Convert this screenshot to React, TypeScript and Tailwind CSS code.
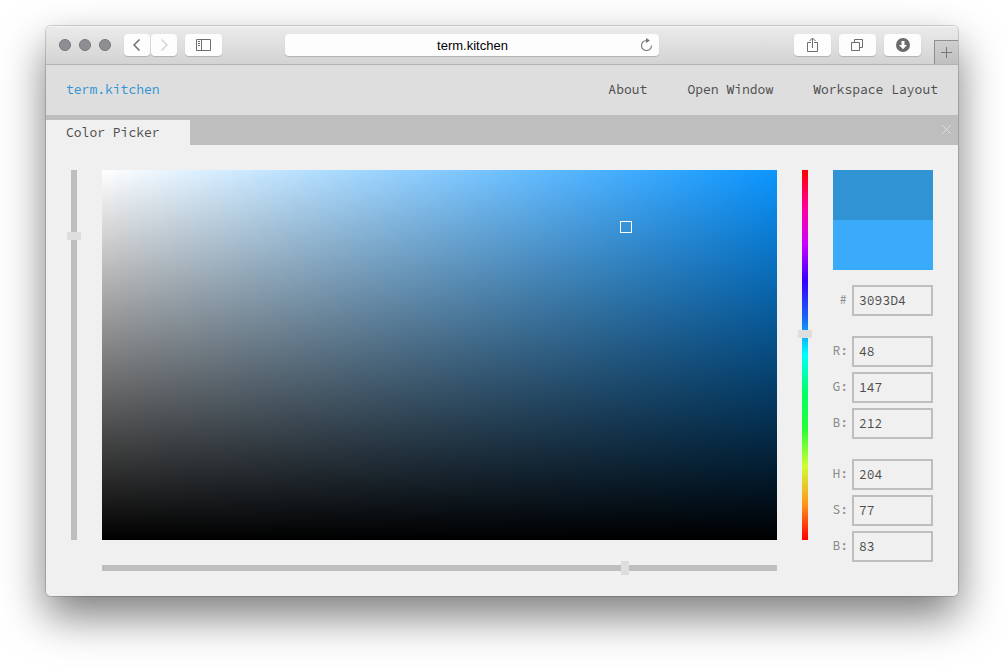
import React from "react";

const hueStops =
  "bg-[linear-gradient(to_bottom,#ff0000_0%,#ff0099_10%,#cd00ff_20%,#3200ff_30%,#1a66f5_40%,#00fffd_50%,#00ff66_60%,#26ff33_70%,#cdff33_80%,#ff991a_90%,#ff0000_100%)]";

const button =
  "flex h-[22px] items-center justify-center rounded-[4px] bg-[#fdfdfd] text-[#6e6e6e] shadow-[0_1px_1px_rgba(0,0,0,0.18)]";

function Field({ label, value, gap }: { label: string; value: string; gap?: boolean }) {
  return (
    <label className={gap ? "mt-[20px] flex h-[31px] items-center" : "mt-[5px] flex h-[31px] items-center"}>
      <span className="-mt-[2px] mr-1 flex w-[15px] justify-end text-[#8a8a8a]">
        {label}
        {label === "#" && <span className="w-px" />}
      </span>
      <input
        className="h-[31px] w-[81px] border-2 border-[#bebebe] bg-transparent px-[5px] text-[#4d4d4d] outline-none"
        defaultValue={value}
      />
    </label>
  );
}

function Toolbar() {
  return (
    <div className="flex h-[39px] items-start border-b border-[#b2b2b2] bg-linear-to-b from-[#ebebeb] to-[#d3d3d3] shadow-[inset_0_1px_0_#f5f5f5]">
      <div className="mt-[13px] ml-[13px] flex gap-2">
        <i className="size-3 rounded-full border border-[#77777c] bg-[#8e8e93]" />
        <i className="size-3 rounded-full border border-[#77777c] bg-[#8e8e93]" />
        <i className="size-3 rounded-full border border-[#77777c] bg-[#8e8e93]" />
      </div>
      <div className="mt-2 ml-[13px] flex gap-px">
        <span className={`${button} w-[26px]`}>
          <svg width="8" height="12" viewBox="0 0 8 12" fill="none" stroke="#6e6e6e" strokeWidth="1.5"><path d="M6.500 .5 1 6l5.500 5.500" /></svg>
        </span>
        <span className={`${button} w-[26px]`}>
          <svg width="8" height="12" viewBox="0 0 8 12" fill="none" stroke="#d5d5d5" strokeWidth="1.5"><path d="M1.500 .5 7 6l-5.500 5.500" /></svg>
        </span>
      </div>
      <span className={`${button} mt-2 ml-2 w-[37px]`}>
        <svg width="15" height="12" viewBox="0 0 15 12" fill="none" stroke="currentColor"><path d="M.5.5h14v11H.5zM5.500.5v11M2 2.500h2M2 4.500h2M2 6.500h2" /></svg>
      </span>
      <div className="mt-2 ml-[63px] flex h-[22px] w-[374px] items-center rounded-[4px] bg-[#fdfdfd] pr-[6px] font-['Liberation_Sans',sans-serif] text-[13px] text-black shadow-[0_1px_1px_rgba(0,0,0,0.18)]">
        <span className="flex-1 pt-[2px] pl-[20px] text-center">term.kitchen</span>
        <svg width="13" height="14" viewBox="0 0 13 14" fill="none" stroke="#777"><path d="M6.500 2.500a5 5 0 1 0 5 5" strokeWidth="1.100" /><path d="M6 0v5L10 2.500z" fill="#777" stroke="none" /></svg>
      </div>
      <div className="mt-2 ml-[135px] flex gap-2">
        <span className={`${button} w-[37px]`}>
          <svg width="11" height="16" viewBox="0 0 11 16" fill="none" stroke="currentColor"><path d="M4 5.500H.5v9h10v-9H7M5.500 11V1M2.500 4l3-3 3 3" /></svg>
        </span>
        <span className={`${button} w-[37px]`}>
          <svg width="13" height="12" viewBox="0 0 13 12" fill="none" stroke="currentColor"><path d="M.5 3.500h8v8h-8zM3.500 3.500v-3h8v8h-3" /></svg>
        </span>
        <span className={`${button} w-[37px]`}>
          <svg width="14" height="14" viewBox="0 0 14 14"><circle cx="7" cy="7" r="7" fill="#6b6b6b" /><path d="M5.500 3h3v4h2.500L7 11.300 3 7h2.500z" fill="#fff" /></svg>
        </span>
      </div>
      <div className="mt-[14px] ml-[13px] flex h-6 w-6 items-center justify-center border-t border-l border-[#8f8f8f] bg-linear-to-b from-[#cecece] to-[#bfbfbf]">
        <svg width="11" height="11" viewBox="0 0 11 11" stroke="#777"><path d="M5.500 0v11M0 5.500h11" /></svg>
      </div>
    </div>
  );
}

export default function App() {
  return (
    <div className="h-[670px] w-[1005px] overflow-hidden bg-white pt-[26px] pl-[46px] font-['Source_Code_Pro','Noto_Sans_Mono_CJK_SC','Liberation_Mono',monospace] text-[13px] leading-5 text-[#4d4d4d]">
      <div className="h-[570px] w-[912px] rounded-[5px] shadow-[0_0_0_1px_rgba(0,0,0,0.16),0_20px_44px_rgba(0,0,0,0.52)]">
        <div className="h-full overflow-hidden rounded-[5px] bg-[#f0f0f0]">
          <Toolbar />
          <nav className="flex h-[50px] items-center bg-[#dedede] px-5">
            <a className="flex-1 text-[#3093d4]">term.kitchen</a>
            <div className="flex gap-10">
              <a>About</a>
              <a>Open Window</a>
              <a>Workspace Layout</a>
            </div>
          </nav>
          <div className="flex h-[30px] items-end justify-between bg-[#bebebe] pr-[7px]">
            <div className="flex h-[25px] w-[144px] items-center bg-[#f0f0f0] pl-5">Color Picker</div>
            <svg className="mb-[11px]" width="9" height="9" viewBox="0 0 9 9" stroke="#dedede"><path d="M0 0l9 9M9 0 0 9" /></svg>
          </div>
          <main className="flex pt-[25px] pl-[25px]">
            <div className="relative h-[370px] w-[6px] bg-[#bebebe]">
              <i className="absolute top-[62px] -left-1 h-2 w-[14px] bg-[#dedede]" />
            </div>
            <div className="ml-[25px]">
              <div className="relative h-[370px] w-[675px] bg-[linear-gradient(to_top,#000,transparent),linear-gradient(to_right,#fff,#0b95ff)]">
                <i className="absolute top-[51px] left-[518px] size-3 border border-white" />
              </div>
              <div className="relative mt-[25px] h-[6px] bg-[#bebebe]">
                <i className="absolute -top-1 left-[519px] h-[14px] w-2 bg-[#dedede]" />
              </div>
            </div>
            <div className={`relative ml-[25px] h-[370px] w-[6px] ${hueStops}`}>
              <i className="absolute top-[160px] -left-1 h-2 w-[14px] bg-[#dedede]" />
            </div>
            <div className="ml-[25px] w-[100px]">
              <div className="h-[50px] bg-[#3093d4]" />
              <div className="mb-[10px] h-[50px] bg-[#3aabfa]" />
              <div className="flex flex-col">
                <Field label="#" value="3093D4" />
                <Field label="R:" value="48" gap />
                <Field label="G:" value="147" />
                <Field label="B:" value="212" />
                <Field label="H:" value="204" gap />
                <Field label="S:" value="77" />
                <Field label="B:" value="83" />
              </div>
            </div>
          </main>
        </div>
      </div>
    </div>
  );
}
